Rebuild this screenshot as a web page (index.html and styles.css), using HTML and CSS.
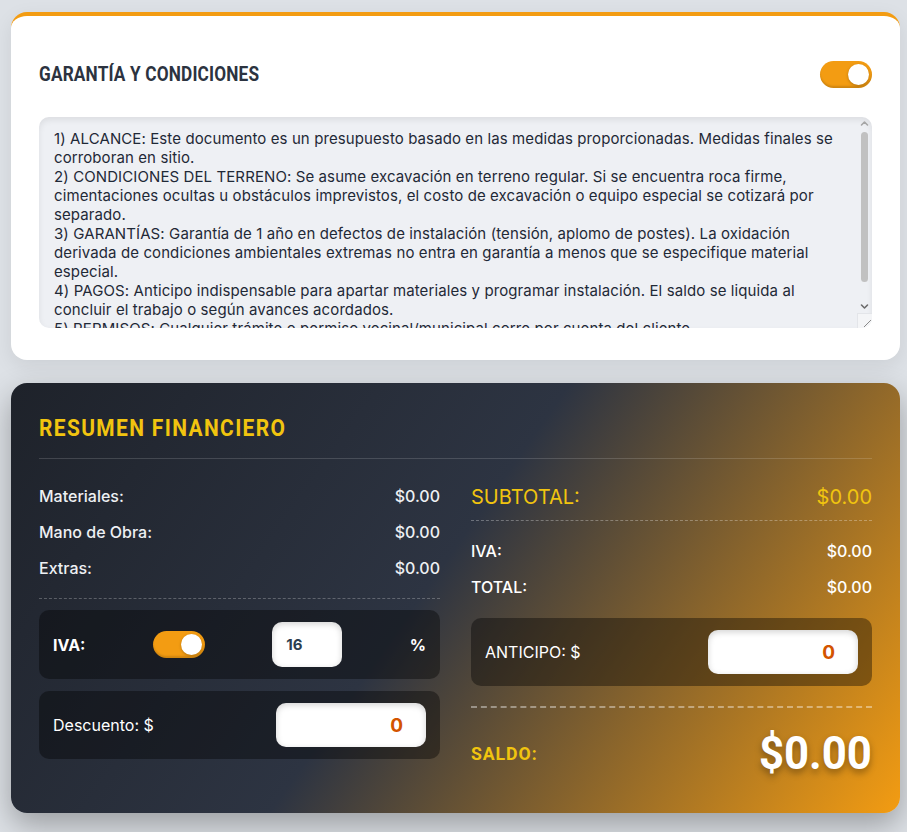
FILE: index.html
```html
<!DOCTYPE html>
<html lang="es">
<head>
<meta charset="utf-8">
<title>Presupuesto</title>
<link rel="stylesheet" href="styles.css">
</head>
<body>
<section class="card terms">
  <div class="card-head">
    <h2 class="head-title">GARANTÍA Y CONDICIONES</h2>
    <span class="toggle"><span class="knob"></span></span>
  </div>
  <div class="terms-box">
    <textarea class="terms-text">1) ALCANCE: Este documento es un presupuesto basado en las medidas proporcionadas. Medidas finales se corroboran en sitio.
2) CONDICIONES DEL TERRENO: Se asume excavación en terreno regular. Si se encuentra roca firme, cimentaciones ocultas u obstáculos imprevistos, el costo de excavación o equipo especial se cotizará por separado.
3) GARANTÍAS: Garantía de 1 año en defectos de instalación (tensión, aplomo de postes). La oxidación derivada de condiciones ambientales extremas no entra en garantía a menos que se especifique material especial.
4) PAGOS: Anticipo indispensable para apartar materiales y programar instalación. El saldo se liquida al concluir el trabajo o según avances acordados.
5) PERMISOS: Cualquier trámite o permiso vecinal/municipal corre por cuenta del cliente.</textarea>
    <div class="sbar" aria-hidden="true">
      <span class="sb-btn"><svg width="15" height="14" viewBox="0 0 15 14"><path d="M4.5 8 L7.5 5 L10.5 8" fill="none" stroke="#a6a6a6" stroke-width="1.6" stroke-linecap="round" stroke-linejoin="round"/></svg></span>
      <span class="sb-track"><span class="sb-thumb"></span></span>
      <span class="sb-btn"><svg width="15" height="14" viewBox="0 0 15 14"><path d="M4.5 6 L7.5 9 L10.5 6" fill="none" stroke="#6b6b6b" stroke-width="1.6" stroke-linecap="round" stroke-linejoin="round"/></svg></span>
      <span class="sb-grip"><svg width="15" height="15" viewBox="0 0 15 15"><path d="M13 6 L6 13 M13 10 L10 13" fill="none" stroke="#8a8a8a" stroke-width="1"/></svg></span>
    </div>
  </div>
</section>

<section class="summary">
  <h2 class="summary-head"><span class="summary-title">RESUMEN FINANCIERO</span></h2>
  <div class="cols">
    <div class="col">
      <div class="line"><span>Materiales:</span><span>$0.00</span></div>
      <div class="line"><span>Mano de Obra:</span><span>$0.00</span></div>
      <div class="line"><span>Extras:</span><span>$0.00</span></div>
      <div class="sep"></div>
      <div class="panel panel-iva">
        <span class="panel-label bold">IVA:</span>
        <span class="toggle"><span class="knob"></span></span>
        <input class="field field-pct" type="text" value="16">
        <span class="panel-label bold">%</span>
      </div>
      <div class="panel">
        <span class="panel-label">Descuento: $</span>
        <input class="field field-money" type="text" value="0">
      </div>
    </div>
    <div class="col">
      <div class="subtotal"><span>SUBTOTAL:</span><span>$0.00</span></div>
      <div class="line line-strong first"><span>IVA:</span><span>$0.00</span></div>
      <div class="line line-strong"><span>TOTAL:</span><span>$0.00</span></div>
      <div class="panel panel-anticipo">
        <span class="panel-label">ANTICIPO: $</span>
        <input class="field field-money" type="text" value="0">
      </div>
      <div class="sep-strong"></div>
      <div class="saldo"><span class="saldo-label">SALDO:</span><span class="saldo-value">$0.00</span></div>
    </div>
  </div>
</section>
</body>
</html>
```

FILE: styles.css
```css
* { box-sizing: border-box; }

body {
  margin: 0;
  padding: 12px 7px 30px 11px;
  background: #dde1e6;
  font-family: Inter, "Noto Sans", sans-serif;
  color: #1f2937;
}

.card {
  background: #ffffff;
  border-top: 4px solid #f39c12;
  border-radius: 16px;
  padding: 45px 28px 32px;
  box-shadow: 0 6px 20px rgba(0, 0, 0, 0.08);
}

.card-head {
  display: flex;
  align-items: center;
  justify-content: space-between;
  margin-bottom: 29px;
}

.head-title,
.summary-title,
.saldo-label,
.saldo-value {
  font-family: Roboto, "Liberation Sans", sans-serif;
  font-weight: 700;
  margin: 0;
  display: inline-block;
  transform-origin: left center;
}

.head-title {
  font-size: 21px;
  letter-spacing: 0.2px;
  color: #2c3340;
  line-height: 27px;
  transform: scaleX(0.82);
}

.toggle {
  display: inline-flex;
  align-items: center;
  justify-content: flex-end;
  width: 52px;
  height: 27px;
  padding: 3px;
  border-radius: 14px;
  background: #f39c12;
  box-shadow: inset 0 -2px 2px rgba(0, 0, 0, 0.15);
}

.knob {
  width: 21px;
  height: 21px;
  border-radius: 50%;
  background: #ffffff;
  box-shadow: 0 1px 3px rgba(0, 0, 0, 0.25);
}

.terms-box {
  display: flex;
  height: 211px;
  border-radius: 10px;
  background: #eef0f4;
  box-shadow: inset 0 3px 6px rgba(0, 0, 0, 0.08);
  overflow: hidden;
}

.terms-text {
  display: block;
  flex: 1;
  min-width: 0;
  height: 100%;
  padding: 12px 15px;
  border: none;
  background: transparent;
  font-family: Inter, "Noto Sans", sans-serif;
  font-size: 15px;
  letter-spacing: 0.1px;
  line-height: 19px;
  color: #1f2937;
  resize: none;
  overflow: hidden;
  outline: none;
}

.sbar {
  display: flex;
  flex-direction: column;
  width: 15px;
  flex: none;
}

.sb-btn {
  display: block;
  height: 14px;
}

.sb-btn svg,
.sb-grip svg {
  display: block;
}

.sb-track {
  flex: 1;
  padding: 1px 4px 0;
}

.sb-thumb {
  display: block;
  height: 150px;
  border-radius: 4px;
  background: #c1c1c1;
}

.sb-grip {
  display: block;
  height: 15px;
  background: #f4f5f7;
  border-top: 1px solid #e3e5e9;
  border-left: 1px solid #e3e5e9;
}

.summary {
  margin-top: 23px;
  border-radius: 16px;
  padding: 28px;
  background: linear-gradient(125deg, #1e222a 0%, #2d3442 47%, #f39c12 100%);
  box-shadow: 0 12px 30px rgba(0, 0, 0, 0.3);
  color: #f1f3f5;
}

.summary-head {
  margin: 0;
  line-height: 34px;
  padding-bottom: 12px;
  border-bottom: 1px solid rgba(255, 255, 255, 0.15);
}

.summary-title {
  font-size: 23px;
  letter-spacing: 1.5px;
  color: #f1c40f;
  transform: scaleX(0.91);
}

.cols {
  display: grid;
  grid-template-columns: 1fr 1fr;
  column-gap: 31px;
  padding-top: 19px;
}

.col {
  display: flex;
  flex-direction: column;
}

.line {
  display: flex;
  justify-content: space-between;
  align-items: center;
  height: 36px;
  font-size: 16px;
  font-weight: 500;
  color: #eef0f3;
}

.line-strong { font-weight: 500; color: #ffffff; }
.line.first { margin-top: 12px; }

.sep {
  margin-top: 12px;
  border-top: 1px dashed rgba(255, 255, 255, 0.25);
  margin-bottom: 11px;
}

.panel {
  display: flex;
  align-items: center;
  justify-content: space-between;
  padding: 12px 14px;
  border-radius: 10px;
  background: rgba(0, 0, 0, 0.38);
  margin-bottom: 12px;
}

.panel-anticipo { margin-top: 13px; margin-bottom: 0; }

.panel-label {
  font-size: 16px;
  color: #ffffff;
}

.panel-label.bold { font-weight: 700; }

.field {
  height: 44px;
  border: none;
  border-radius: 10px;
  background: #ffffff;
  box-shadow: inset 0 2px 6px rgba(0, 0, 0, 0.18);
  font-family: Inter, "Noto Sans", sans-serif;
  font-weight: 700;
  outline: none;
}

.field-pct {
  width: 70px;
  height: 45px;
  padding: 0 14px;
  font-size: 15px;
  color: #2c3e50;
}

.field-money {
  width: 150px;
  padding: 0 23px 0 12px;
  text-align: right;
  font-size: 19px;
  color: #d35400;
}

.subtotal {
  display: flex;
  justify-content: space-between;
  padding: 7px 0 11px;
  line-height: 24px;
  font-size: 20px;
  color: #f1c40f;
  border-bottom: 1px dashed rgba(255, 255, 255, 0.3);
}

.sep-strong {
  margin-top: 20px;
  border-top: 2px dashed rgba(255, 255, 255, 0.4);
}

.saldo {
  display: flex;
  justify-content: space-between;
  align-items: center;
  margin-top: 13px;
  height: 64px;
}

.saldo-label {
  font-size: 19px;
  letter-spacing: 1px;
  color: #f1c40f;
  transform: scaleX(0.93);
}

.saldo-value {
  font-size: 46px;
  color: #ffffff;
  line-height: 56px;
  transform: scaleX(0.95);
  transform-origin: right center;
  text-shadow: 0 4px 8px rgba(0, 0, 0, 0.35);
}
```
